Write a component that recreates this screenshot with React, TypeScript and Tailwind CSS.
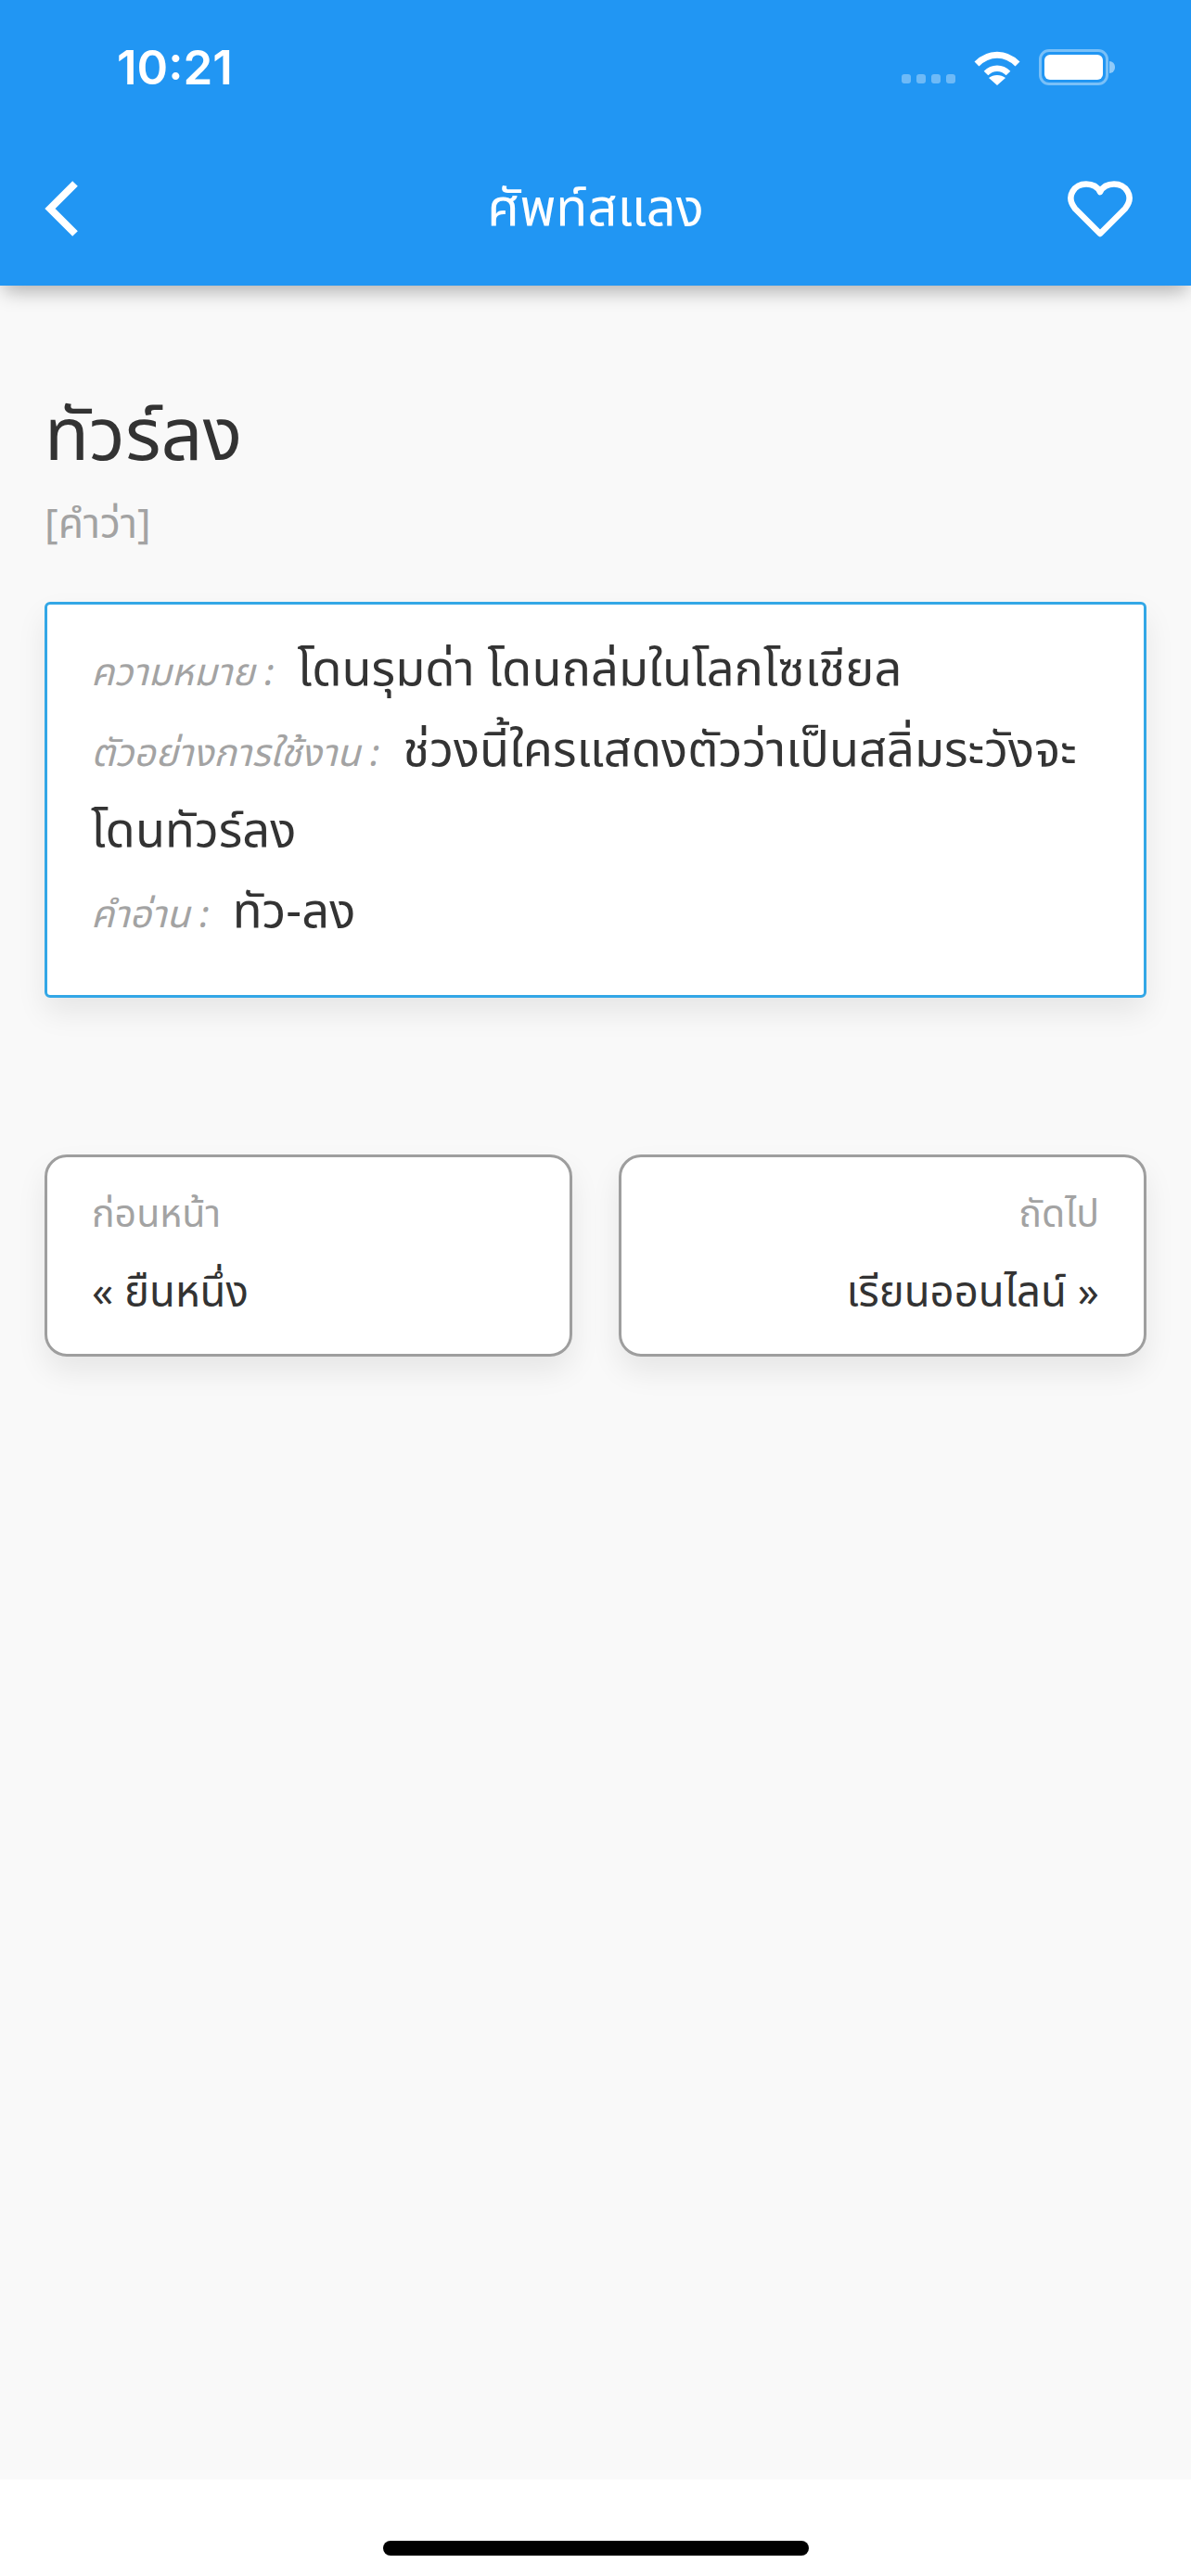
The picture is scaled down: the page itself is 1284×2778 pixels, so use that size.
const FONT = "font-['Noto_Sans','Noto_Sans_Thai','Sarabun','DejaVu_Sans',sans-serif]";

function StatusIcons() {
  return (
    <div className="flex items-end">
      <div className="flex gap-[6px] mb-[2px]">
        <span className="w-[10px] h-[10px] rounded-[3px] bg-white/35" />
        <span className="w-[10px] h-[10px] rounded-[3px] bg-white/35" />
        <span className="w-[10px] h-[10px] rounded-[3px] bg-white/35" />
        <span className="w-[10px] h-[10px] rounded-[3px] bg-white/35" />
      </div>
      <svg className="ml-[20px]" width="50" height="39" viewBox="0 0 50 39">
        <path d="M3 16 C16 3 34 3 47 16" fill="none" stroke="white" strokeWidth="7" />
        <path d="M13 26 C20 19 30 19 37 26" fill="none" stroke="white" strokeWidth="6.5" />
        <path d="M25 39 L16 31 C21 27 29 27 34 31 Z" fill="white" />
      </svg>
      <div className="ml-[20px] flex items-center">
        <div className="w-[75px] h-[39px] rounded-[11px] border-[3px] border-white/40 p-[3px]">
          <div className="w-full h-full rounded-[6px] bg-white" />
        </div>
        <div className="w-[6px] h-[13px] ml-[1px] rounded-r-full bg-white/50" />
      </div>
    </div>
  );
}

function Field({ label, value }: { label: string; value: string }) {
  return (
    <p>
      <em className="text-[40.8px] leading-none text-[#a3a3a3]">{label} :</em>
      <span className="ml-[25px]">{value}</span>
    </p>
  );
}

function NavCard({ label, value, right }: { label: string; value: string; right?: boolean }) {
  return (
    <div className={`flex-1 h-[218px] rounded-[24px] border-[3px] border-[#9e9e9e] bg-white px-[48px] pt-[27px] shadow-[0_16px_32px_rgba(0,0,0,0.08)] ${right ? 'text-right' : ''}`}>
      <p className="text-[41px] leading-[64px] text-[#a3a3a3]">{label}</p>
      <p className="mt-[20px] text-[45.5px] leading-[64px] text-[#333333]">{value}</p>
    </div>
  );
}

export default function App() {
  return (
    <div className={`w-[1284px] h-[2778px] flex flex-col bg-[#f9f9f9] overflow-hidden ${FONT}`}>
      <header className="h-[308px] bg-[#2196f3] text-white shadow-[0_10px_20px_-4px_rgba(0,0,0,0.3)] relative z-10">
        <div className="h-[146px] pl-[126px] pr-[82px] flex items-start justify-between pt-[53px]">
          <span className="font-['Inter',sans-serif] font-semibold text-[51px] leading-[39px]">10:21</span>
          <StatusIcons />
        </div>
        <div className="h-[162px] px-[48px] flex items-start justify-between pt-[48px]">
          <div className="w-[85px]">
            <svg width="38" height="62" viewBox="0 0 38 62">
              <path d="M33 4 L6 31 L33 58" fill="none" stroke="white" strokeWidth="8" />
            </svg>
          </div>
          <h1 className="text-[56px] leading-[64px] -mt-[5px]">ศัพท์สแลง</h1>
          <div className="w-[85px] flex justify-end pr-[15px] pt-[1px]">
            <svg width="70" height="62" viewBox="0 0 70 62">
              <path d="M35 57 L8 30 C-3 16 8 3.5 20 3.5 C26 3.5 32 6 35 12 C38 6 44 3.5 50 3.5 C62 3.5 73 16 62 30 Z" fill="none" stroke="white" strokeWidth="6.5" strokeLinejoin="round" />
            </svg>
          </div>
        </div>
      </header>

      <main className="flex-1 px-[48px] pt-[103px]">
        <h2 className="text-[79px] leading-[110px] text-[#333333]">ทัวร์ลง</h2>
        <p className="mt-[12px] text-[44.5px] leading-[60px] text-[#a3a3a3]">[คำว่า]</p>

        <section className="mt-[56px] h-[427px] rounded-[6px] border-[3px] border-[#33a7e6] bg-white px-[47px] pt-[23px] text-[52.4px] leading-[87px] text-[#333333] shadow-[0_16px_32px_rgba(0,0,0,0.08)]">
          <Field label="ความหมาย" value="โดนรุมด่า โดนถล่มในโลกโซเชียล" />
          <Field label="ตัวอย่างการใช้งาน" value="ช่วงนี้ใครแสดงตัวว่าเป็นสลิ่มระวังจะ โดนทัวร์ลง" />
          <Field label="คำอ่าน" value="ทัว-ลง" />
        </section>

        <nav className="mt-[169px] flex gap-[50px]">
          <NavCard label="ก่อนหน้า" value="« ยืนหนึ่ง" />
          <NavCard label="ถัดไป" value="เรียนออนไลน์ »" right />
        </nav>
      </main>

      <footer className="h-[104px] bg-white flex justify-center pt-[66px]">
        <div className="w-[459px] h-[16px] rounded-full bg-black" />
      </footer>
    </div>
  );
}
